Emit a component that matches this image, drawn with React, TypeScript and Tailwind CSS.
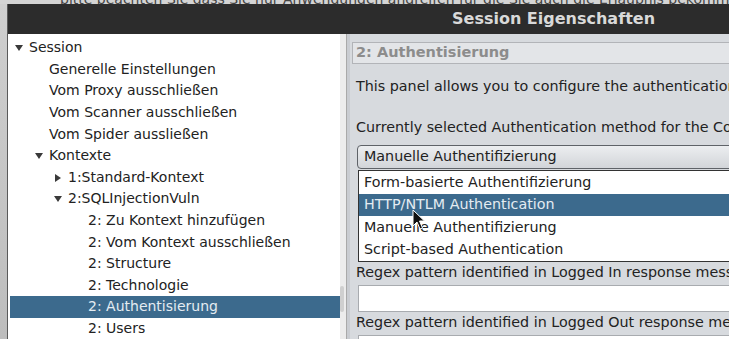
import React from "react";

const font = { fontFamily: '"DejaVu Sans", "Noto Sans", sans-serif' };

type Row = { label: string; indent: number; arrow?: "down" | "right"; selected?: boolean };

const rows: Row[] = [
  { label: "Session", indent: 0, arrow: "down" },
  { label: "Generelle Einstellungen", indent: 1 },
  { label: "Vom Proxy ausschließen", indent: 1 },
  { label: "Vom Scanner ausschließen", indent: 1 },
  { label: "Vom Spider aussließen", indent: 1 },
  { label: "Kontexte", indent: 1, arrow: "down" },
  { label: "1:Standard-Kontext", indent: 2, arrow: "right" },
  { label: "2:SQLInjectionVuln", indent: 2, arrow: "down" },
  { label: "2: Zu Kontext hinzufügen", indent: 3 },
  { label: "2: Vom Kontext ausschließen", indent: 3 },
  { label: "2: Structure", indent: 3 },
  { label: "2: Technologie", indent: 3 },
  { label: "2: Authentisierung", indent: 3, selected: true },
  { label: "2: Users", indent: 3 },
];

function Arrow({ dir }: { dir: "down" | "right" }) {
  return dir === "down" ? (
    <svg width="8" height="8" viewBox="0 0 8 8">
      <polygon points="0,1 8,1 4,7" fill="#3a3a3a" />
    </svg>
  ) : (
    <svg width="8" height="8" viewBox="0 0 8 8">
      <polygon points="1,0 7,4 1,8" fill="#3a3a3a" />
    </svg>
  );
}

function TreeRow({ r }: { r: Row }) {
  const textLeft = [19, 39, 58, 78][r.indent];
  return (
    <div
      className={`relative flex h-[21.6px] items-center whitespace-nowrap text-[14px] ${
        r.selected ? "bg-[#3c6a8d] text-[#e4ecf2]" : "text-[#222222]"
      }`}
    >
      {r.arrow && (
        <div className="absolute top-[7px]" style={{ left: textLeft - 14 }}>
          <Arrow dir={r.arrow} />
        </div>
      )}
      <span style={{ paddingLeft: textLeft }}>{r.label}</span>
    </div>
  );
}

export default function App() {
  return (
    <div className="relative h-[339px] w-[729px] overflow-hidden bg-[#cdcdcd]" style={font}>
      {/* background text strip */}
      <div className="h-[4px] overflow-hidden bg-[#d4d4d4]">
        <div className="mt-[-11px] whitespace-nowrap pl-[60px] text-[14px] text-[#444]">
          bitte beachten Sie dass Sie nur Anwendungen angreifen für die Sie auch die Erlaubnis bekommen haben
        </div>
      </div>
      <div className="flex h-[335px] w-[729px]">
        <div className="w-[7px] shrink-0 bg-gradient-to-b from-[#cfcfcf] to-[#bdbdbd]" />
        <div className="flex min-w-0 flex-1 flex-col border-l border-[#5a5a5a]">
          {/* title bar */}
          <div className="flex h-[30px] shrink-0 items-center bg-[#2c2c2c] pl-[444px]">
            <span className="whitespace-nowrap text-[16px] font-bold text-[#d9d9d9]">
              Session Eigenschaften
            </span>
          </div>
          <div className="flex min-h-0 flex-1 overflow-hidden">
            {/* tree */}
            <div className="w-[332px] shrink-0 bg-white pl-[2px] pt-[3px]">
              {rows.map((r) => (
                <TreeRow key={r.label} r={r} />
              ))}
            </div>
            {/* scrollbar */}
            <div className="relative w-[7px] shrink-0 border-r border-[#a9a9a9] bg-[#ececec]">
              <div className="absolute left-[0px] top-[252px] h-[26px] w-[4px] rounded-sm bg-[#cfcfcf]" />
            </div>
            <div className="w-[3px] shrink-0 bg-[#c9ccd1]" />
            {/* right panel */}
            <div className="min-w-0 flex-1 overflow-hidden bg-[#d7dade] pt-[8px] text-[14.3px] text-[#222222]">
              <div className="w-[440px]">
                <div className="ml-[2px] flex h-[22px] items-center border border-[#b2b4b8] bg-[#e3e5e8] pl-[3px]">
                  <span className="whitespace-nowrap text-[14.5px] font-bold text-[#8c8c8c]">2: Authentisierung</span>
                </div>
                <div className="mt-[13px] h-[18px] whitespace-nowrap pl-[6px] leading-[18px]">
                  This panel allows you to configure the authentication method used for this context
                </div>
                <div className="mt-[23px] h-[18px] whitespace-nowrap pl-[6px] leading-[18px]">
                  Currently selected Authentication method for the Context
                </div>
                <div className="ml-[7px] mt-[9px] flex h-[24px] items-center rounded-[4px] border border-[#5f6368] bg-gradient-to-b from-[#eceef0] to-[#d2d5d9] pl-[6px]">
                  <span className="whitespace-nowrap">Manuelle Authentifizierung</span>
                </div>
                <div className="ml-[8px] mt-[1px] border border-[#333] bg-white">
                  {[
                    "Form-basierte Authentifizierung",
                    "HTTP/NTLM Authentication",
                    "Manuelle Authentifizierung",
                    "Script-based Authentication",
                  ].map((t, i) => (
                    <div
                      key={t}
                      className={`flex h-[22.5px] items-center whitespace-nowrap pl-[5px] ${
                        i === 1 ? "bg-[#3c6a8d] text-[#e4ecf2]" : "text-[#222]"
                      }`}
                    >
                      {t}
                    </div>
                  ))}
                </div>
                <div className="mt-[1px] h-[18px] whitespace-nowrap pl-[6px] leading-[18px]">
                  Regex pattern identified in Logged In response messages
                </div>
                <div className="ml-[8px] mt-[4px] h-[27px] border border-[#a8abaf] bg-white" />
                <div className="mt-[1px] h-[18px] whitespace-nowrap pl-[6px] leading-[18px]">
                  Regex pattern identified in Logged Out response messages
                </div>
                <div className="ml-[8px] mt-[4px] h-[27px] border border-[#a8abaf] bg-white" />
              </div>
            </div>
          </div>
        </div>
      </div>
      {/* mouse cursor */}
      <svg className="absolute left-[412px] top-[209px]" width="14" height="22" viewBox="0 0 14 22">
        <path d="M1 1 L1 17 L5 13 L8 20 L10.5 19 L7.5 12 L12.5 12 Z" fill="#111" stroke="#fff" strokeWidth="1" />
      </svg>
    </div>
  );
}
